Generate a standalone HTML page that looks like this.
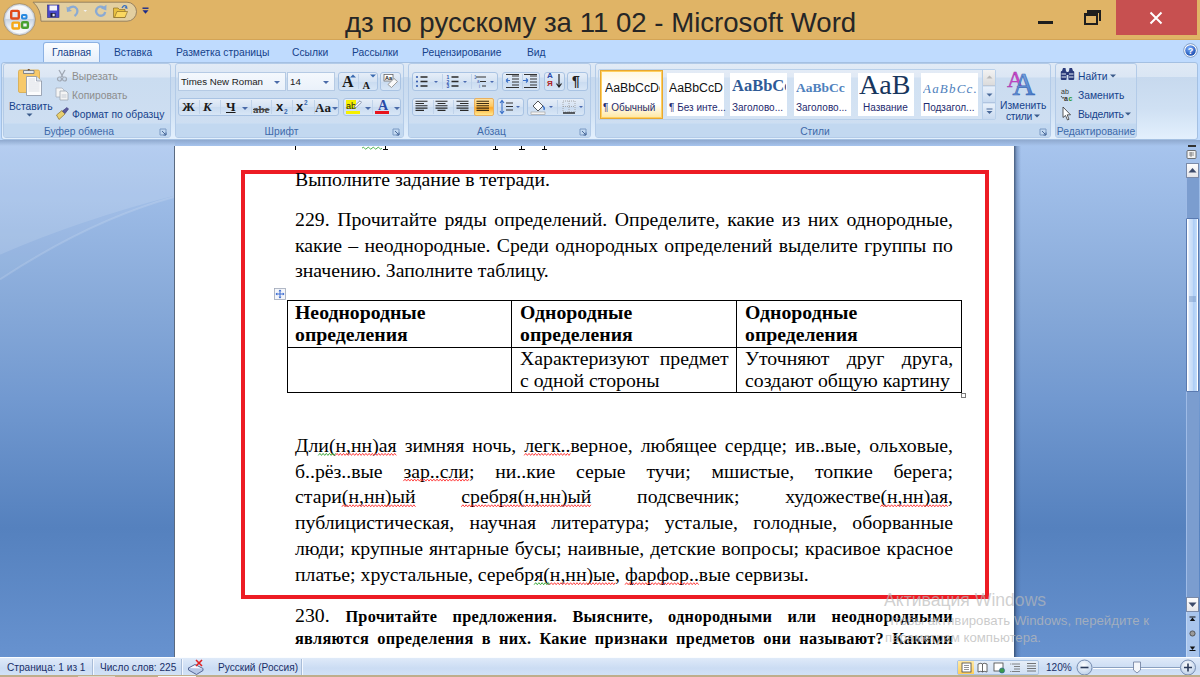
<!DOCTYPE html>
<html><head><meta charset="utf-8">
<style>
*{margin:0;padding:0;box-sizing:border-box}
html,body{width:1200px;height:677px;overflow:hidden;background:#6b93cd}
body{position:relative;font-family:"Liberation Sans",sans-serif}
.a{position:absolute}
#title{left:0;top:0;width:1200px;height:40px;background:#e0b466;border-bottom:1px solid #d3a456}
#tabs{left:0;top:40px;width:1200px;height:22px;background:#bfdbfe}
#ribbon{left:0;top:62px;width:1200px;height:78px;background:linear-gradient(#dfe9f5,#c6d9f0)}
#work{left:0;top:140px;width:1200px;height:517px;background:linear-gradient(#a8c5ee 0%,#88aad9 31%,#7299d0 50%,#5581be 75%,#6792cf 100%)}
#page{left:175px;top:146px;width:839px;height:511px;background:#fff}
#status{left:0;top:657px;width:1200px;height:18px;border-top:1px solid #fbfdff;background:linear-gradient(#dfeaf9,#cbdcf3 60%,#d2e2f7)}
.doc{font-family:"Liberation Serif",serif;font-size:19.7px;color:#000;white-space:nowrap}

.ln{position:absolute;height:26px;line-height:26px;font-family:"Liberation Serif",serif;font-size:19.75px;color:#000;white-space:nowrap}
.j{text-align:justify;text-align-last:justify;white-space:nowrap;overflow:visible}
.b2{font-size:16.3px;letter-spacing:0.3px}
#redbox{left:241px;top:170px;width:748px;height:429px;border:4px solid #ed1c24}
.tb{position:absolute;background:#000}

.tabt{top:6px;font-size:10.3px;line-height:14px;color:#15428b;white-space:nowrap}

#ribbon{background:#bfdbfe}
.panel{left:1px;top:0;width:1197px;height:78px;border:1px solid #a4c0e2;border-radius:3px;background:linear-gradient(#dfe9f5 0,#dae6f4 18%,#c7d9ee 19%,#cfe0f3 60%,#e3f0fd 100%)}
.grp{top:1px;height:75px;border:1px solid #b3cbe8;border-radius:3px;background:linear-gradient(#e2ebf6 0,#dbe6f4 18%,#cadcf0 19%,#cfdff2 100%);overflow:hidden}
.glab{position:absolute;left:0;right:0;bottom:0;height:14px;background:#c2d8f0;border-top:1px solid #c8dcf2;color:#3e6aaa;font-size:10.3px;line-height:15px;text-align:center;white-space:nowrap}
.cbox{border:1px solid #b5cae4;background:linear-gradient(#f4f8fd,#eaf1fa);font-size:9.7px;line-height:17px;color:#1a1a1a;white-space:nowrap;overflow:hidden}
.cbox span{position:absolute;left:2px;top:0}
.dd{position:absolute;display:block;width:0;height:0;border-left:3px solid transparent;border-right:3px solid transparent;border-top:3px solid #4a6aa8;top:8px}
.bgrp{border:1px solid #a9c3e3;border-radius:3px;background:linear-gradient(#e6eef8,#d4e2f3 50%,#c9dbf0 51%,#d8e6f6)}
.sep{position:absolute;top:1px;bottom:1px;width:1px;background:#c0d3ea}
.gly{line-height:16px;color:#1a1a1a;white-space:nowrap}
.rt{font-size:10.3px;line-height:14px;color:#15428b;white-space:nowrap}
.stx{line-height:18px;color:#111;white-space:nowrap;overflow:hidden}
.stl{font-size:10px;line-height:12px;color:#1e2a6e;white-space:nowrap}

.wm{font-family:"Liberation Sans",sans-serif;color:rgba(185,185,185,0.75);white-space:nowrap;line-height:18px;z-index:5}
.st{top:1.5px;font-size:10.1px;letter-spacing:0;line-height:16px;color:#1a2f68;white-space:nowrap}
.ssep{top:1px;width:2px;height:17px;border-left:1px solid #a8bcd8;border-right:1px solid #f4f8fe}
</style></head>
<body>

<div id="title" class="a">
 <svg class="a" style="left:0;top:0" width="40" height="40" viewBox="0 0 40 40">
  <defs>
   <linearGradient id="ob" x1="0" y1="0" x2="0" y2="1"><stop offset="0" stop-color="#fdfdfe"/><stop offset="0.48" stop-color="#e4eaf2"/><stop offset="0.5" stop-color="#c9d4e2"/><stop offset="0.75" stop-color="#eef2f7"/><stop offset="1" stop-color="#ffffff"/></linearGradient>
  </defs>
  <circle cx="19.5" cy="19.5" r="16.4" fill="#b89a64" opacity="0.55"/>
  <circle cx="19.5" cy="19.5" r="15.6" fill="url(#ob)" stroke="#8c8070" stroke-width="0.7"/><circle cx="19.5" cy="19.5" r="14.6" fill="none" stroke="#c0cad8" stroke-width="1.4" opacity="0.6"/>
  <rect x="11.2" y="10.9" width="7.6" height="7.6" rx="1" fill="#dfe8f4" stroke="#e04a1a" stroke-width="2.4"/>
  <rect x="22" y="15" width="4.5" height="3.5" rx="0.8" fill="#e8f0fa" stroke="#2a8ae0" stroke-width="2"/>
  <rect x="12.5" y="22.6" width="6.7" height="5.9" rx="1" fill="#eef4fa" stroke="#f5a818" stroke-width="2.4"/>
  <rect x="22.1" y="22.3" width="5.8" height="5.4" rx="1" fill="#eef4fa" stroke="#48a030" stroke-width="2.4"/>
 </svg>
 <svg class="a" style="left:30px;top:0" width="125" height="24" viewBox="0 0 125 24">
  <path d="M3 2.2 H97 A9.5 9.5 0 0 1 97 21.2 H11 Q11 9 3 2.2 Z" fill="#e3cfa0" stroke="#8e7a5c" stroke-width="0.9"/>
  <!-- save -->
  <rect x="17.5" y="5" width="11.5" height="12.5" fill="#4848c8" stroke="#2a2a80" stroke-width="0.6"/>
  <rect x="19.5" y="5.5" width="7.5" height="5" fill="#f4f4fa"/>
  <rect x="20.5" y="13" width="5" height="4" fill="#202040"/>
  <rect x="22.5" y="13.8" width="2.2" height="2.5" fill="#e8e8f0"/>
  <!-- undo -->
  <path d="M38.5 8.5 Q44 4.5 47 9 Q48.5 13 44.5 16" fill="none" stroke="#8aaad4" stroke-width="2.2"/>
  <path d="M36.5 6.5 L37 12 L42 11 Z" fill="#8aaad4"/>
  <path d="M53.5 10 L57 10 L55.25 12 Z" fill="#f2f2f2"/>
  <!-- redo -->
  <path d="M73.6 7.6 A4.6 4.6 0 1 0 75.2 12" fill="none" stroke="#8aaad4" stroke-width="2.3"/>
  <path d="M76.5 4.8 L76.3 10.5 L71 8.6 Z" fill="#8aaad4"/>
  <!-- folder -->
  <path d="M83.5 8 L88 8 L89.5 9.5 L95 9.5 L95 17.5 L83.5 17.5 Z" fill="#e8c040" stroke="#7a6020" stroke-width="0.6"/>
  <path d="M84.5 17.5 L87 11.5 L97.5 11.5 L95 17.5 Z" fill="#fbd860" stroke="#7a6020" stroke-width="0.6"/>
  <path d="M92 8 Q94 4 96.5 6.5" fill="none" stroke="#3a70c0" stroke-width="1.3"/>
  <path d="M97 5.5 L97.5 9 L94.5 8 Z" fill="#3a70c0"/>
  <!-- customize -->
  <rect x="112.5" y="7.5" width="6" height="1.4" fill="#1a2a8a"/>
  <path d="M112.5 10.3 L118.5 10.3 L115.5 13.8 Z" fill="#1a2a8a"/>
 </svg>
 <div class="a" id="ttxt" style="left:345px;top:5.7px;font-size:27.6px;line-height:34px;color:#262626;white-space:nowrap">дз по русскому за 11 02 - Microsoft Word</div>
 <div class="a" style="left:1038px;top:21px;width:15px;height:3px;background:#1e1e1e"></div>
 <div class="a" style="left:1087px;top:10px;width:14px;height:11px;border:2px solid #1e1e1e;border-top-width:3px;border-left:none;border-bottom:none"></div>
 <div class="a" style="left:1084px;top:13px;width:14px;height:12px;border:2px solid #1e1e1e;border-top-width:3px;background:#e0b466"></div>
 <div class="a" style="left:1116px;top:0;width:81px;height:35px;background:#c75050"></div>
 <svg class="a" style="left:1149px;top:11px" width="14" height="14" viewBox="0 0 14 14"><path d="M1.5 1.5 L12.5 12.5 M12.5 1.5 L1.5 12.5" stroke="#fff" stroke-width="2"/></svg>
</div>


<div id="tabs" class="a">
 <div class="a" style="left:43px;top:2px;width:57px;height:21px;border:1px solid #8db2e3;border-bottom:none;border-radius:3px 3px 0 0;background:linear-gradient(#fbfdff,#e4eefb)"></div>
 <div class="a tabt" style="left:52px">Главная</div>
 <div class="a tabt" style="left:114px">Вставка</div>
 <div class="a tabt" style="left:176px">Разметка страницы</div>
 <div class="a tabt" style="left:292px">Ссылки</div>
 <div class="a tabt" style="left:352px">Рассылки</div>
 <div class="a tabt" style="left:422px">Рецензирование</div>
 <div class="a tabt" style="left:527px">Вид</div>
 <svg class="a" style="left:1183px;top:3px" width="15" height="15" viewBox="0 0 15 15">
  <defs><radialGradient id="hb" cx="40%" cy="30%" r="70%"><stop offset="0" stop-color="#7fb0ff"/><stop offset="1" stop-color="#1a4fb0"/></radialGradient></defs>
  <circle cx="7.5" cy="7.5" r="6.8" fill="#fff" stroke="#6a8ab8" stroke-width="0.8"/>
  <circle cx="7.5" cy="7.5" r="5.3" fill="url(#hb)"/>
  <text x="7.5" y="11" text-anchor="middle" font-family="Liberation Sans" font-weight="bold" font-size="9" fill="#fff">?</text>
 </svg>
</div>

<div id="ribbon" class="a">
 <div class="a panel"></div>
 <!-- groups -->
 <div class="a grp" style="left:3px;width:168px"><div class="glab" style="padding-right:16px">Буфер обмена</div></div>
 <div class="a grp" style="left:175px;width:229px"><div class="glab" style="padding-right:16px">Шрифт</div></div>
 <div class="a grp" style="left:408px;width:183px"><div class="glab" style="padding-right:16px">Абзац</div></div>
 <div class="a grp" style="left:595px;width:456px"><div class="glab" style="padding-right:16px">Стили</div></div>
 <div class="a grp" style="left:1055px;width:82px"><div class="glab">Редактирование</div></div>
 <!-- dialog launchers -->
 <svg class="a dl" style="left:159px;top:66px" width="9" height="9" viewBox="0 0 9 9"><path d="M1 1 H7 V7 H1 Z" fill="none" stroke="#7a9ac4" stroke-width="1"/><path d="M3 3 L7 7 M4.5 7 H7 V4.5" stroke="#4a6a9a" stroke-width="1" fill="none"/></svg>
 <svg class="a dl" style="left:392px;top:66px" width="9" height="9" viewBox="0 0 9 9"><path d="M1 1 H7 V7 H1 Z" fill="none" stroke="#7a9ac4" stroke-width="1"/><path d="M3 3 L7 7 M4.5 7 H7 V4.5" stroke="#4a6a9a" stroke-width="1" fill="none"/></svg>
 <svg class="a dl" style="left:579px;top:66px" width="9" height="9" viewBox="0 0 9 9"><path d="M1 1 H7 V7 H1 Z" fill="none" stroke="#7a9ac4" stroke-width="1"/><path d="M3 3 L7 7 M4.5 7 H7 V4.5" stroke="#4a6a9a" stroke-width="1" fill="none"/></svg>
 <svg class="a dl" style="left:1039px;top:66px" width="9" height="9" viewBox="0 0 9 9"><path d="M1 1 H7 V7 H1 Z" fill="none" stroke="#7a9ac4" stroke-width="1"/><path d="M3 3 L7 7 M4.5 7 H7 V4.5" stroke="#4a6a9a" stroke-width="1" fill="none"/></svg>

 <!-- ===== Clipboard ===== -->
 <svg class="a" style="left:16px;top:5px" width="28" height="30" viewBox="0 0 28 30">
  <rect x="2.5" y="3" width="21" height="22.5" rx="1.5" fill="#f7c96a" stroke="#d8a848" stroke-width="0.8"/>
  <path d="M7.5 3.5 H18 V6.5 H7.5 Z" fill="#e4e8ee" stroke="#6a7280" stroke-width="0.8"/>
  <path d="M11 3.5 A2 2 0 0 1 14.5 3.5" fill="none" stroke="#6a7280" stroke-width="0.9"/>
  <circle cx="12.8" cy="2.8" r="0.7" fill="#804000"/>
  <path d="M10.5 9.5 H20.5 L25.5 14 V28.5 H10.5 Z" fill="#fcfcfd" stroke="#8a94a4" stroke-width="0.8"/>
  <path d="M20.5 9.5 V14 H25.5" fill="#dfe6f0" stroke="#8a94a4" stroke-width="0.7"/>
  <path d="M12.5 12 H19 M12.5 14 H19 M12.5 16 H23.5 M12.5 18 H23.5 M12.5 20 H23.5 M12.5 22 H23.5 M12.5 24 H23.5" stroke="#cdd2da" stroke-width="0.7"/>
 </svg>
 <div class="a rt" style="left:9px;top:38px;font-size:10.3px">Вставить</div>
 <svg class="a" style="left:26px;top:51px" width="7" height="4"><path d="M0.5 0.5 H6.5 L3.5 3.5 Z" fill="#3a5a8a"/></svg>
 <svg class="a" style="left:56px;top:7px" width="12" height="13" viewBox="0 0 12 13">
  <path d="M3 1 L7 8 M9 1 L5 8" stroke="#a0a8b4" stroke-width="1.3"/>
  <circle cx="3.5" cy="10" r="2" fill="none" stroke="#a0a8b4" stroke-width="1.2"/><circle cx="8.5" cy="10" r="2" fill="none" stroke="#a0a8b4" stroke-width="1.2"/>
 </svg>
 <div class="a rt" style="left:72px;top:8px;color:#8d8d8d">Вырезать</div>
 <svg class="a" style="left:55px;top:25px" width="15" height="14" viewBox="0 0 15 14">
  <path d="M1 1 H7 L9 3 V10 H1 Z" fill="#f4f4f4" stroke="#a8b0bc" stroke-width="0.8"/>
  <path d="M5 4 H11 L13 6 V13 H5 Z" fill="#f4f4f4" stroke="#a0a8b4" stroke-width="0.8"/>
  <path d="M6.5 8 H11.5 M6.5 10 H11.5" stroke="#b8c0cc" stroke-width="0.8"/>
 </svg>
 <div class="a rt" style="left:72px;top:27px;color:#8d8d8d">Копировать</div>
 <svg class="a" style="left:55px;top:44px" width="15" height="15" viewBox="0 0 15 15">
  <path d="M1.5 9 L7 4.5 L10 8 L4 13.5 Z" fill="#e8d070" stroke="#8a7030" stroke-width="0.7"/>
  <path d="M7.5 5 L12 1.5 L13.5 3 L10 7.5 Z" fill="#5a5aa0" stroke="#303070" stroke-width="0.6"/>
 </svg>
 <div class="a rt" style="left:72px;top:46px">Формат по образцу</div>

 <!-- ===== Font ===== -->
 <div class="a cbox" style="left:178px;top:10px;width:108px;height:19px"><span>Times New Roman</span><i class="dd" style="right:5px"></i></div>
 <div class="a cbox" style="left:287px;top:10px;width:48px;height:19px"><span>14</span><i class="dd" style="right:5px"></i></div>
 <div class="a bgrp" style="left:338px;top:10px;width:40px;height:19px"><div class="sep" style="left:19px"></div></div>
 <div class="a gly" style="left:342px;top:12px;font-family:'Liberation Serif';font-size:16px;font-weight:bold">A</div>
 <svg class="a" style="left:350px;top:12px" width="6" height="4"><path d="M0 3.5 L3 0.5 L6 3.5 Z" fill="#3a6ab0"/></svg>
 <div class="a gly" style="left:362.5px;top:16px;font-family:'Liberation Serif';font-size:10.5px;font-weight:bold">A</div>
 <svg class="a" style="left:370px;top:12px" width="6" height="4"><path d="M0 0.5 L6 0.5 L3 3.5 Z" fill="#3a6ab0"/></svg>
 <div class="a bgrp" style="left:380px;top:10px;width:21px;height:19px"></div>
 <svg class="a" style="left:382px;top:11px" width="17" height="16" viewBox="0 0 17 16">
  <rect x="2" y="1.5" width="9" height="6.5" fill="#fff" stroke="#555" stroke-width="0.7"/>
  <text x="6.5" y="7" text-anchor="middle" font-family="Liberation Sans" font-size="5.5" font-weight="bold" fill="#222">Aa</text>
  <path d="M6 11.5 L12 5.5 L15.5 8.5 L9.5 14.5 Z" fill="#fafafa" stroke="#888" stroke-width="0.8"/>
 </svg>

 <div class="a bgrp" style="left:178px;top:36px;width:161px;height:18px">
  <div class="sep" style="left:20px"></div><div class="sep" style="left:41px"></div><div class="sep" style="left:72px"></div><div class="sep" style="left:92px"></div><div class="sep" style="left:113px"></div><div class="sep" style="left:135px"></div>
 </div>
 <div class="a gly" style="left:182px;top:37px;font-family:'Liberation Serif';font-size:13px;font-weight:bold">Ж</div>
 <div class="a gly" style="left:203px;top:37px;font-family:'Liberation Serif';font-size:13px;font-weight:bold;font-style:italic">К</div>
 <div class="a gly" style="left:226px;top:37px;font-family:'Liberation Serif';font-size:13px;font-weight:bold;text-decoration:underline">Ч</div>
 <i class="dd a" style="left:242px;top:45px"></i>
 <div class="a gly" style="left:253px;top:39px;font-family:'Liberation Serif';font-size:11px;font-weight:bold;color:#444;text-decoration:line-through">abe</div>
 <div class="a gly" style="left:276px;top:37px;font-size:13px;font-weight:bold">x</div><div class="a gly" style="left:284px;top:42px;font-size:6.5px;font-weight:bold;color:#3a6ab0">2</div>
 <div class="a gly" style="left:296px;top:37px;font-size:13px;font-weight:bold">x</div><div class="a gly" style="left:304px;top:33px;font-size:6.5px;font-weight:bold;color:#3a6ab0">2</div>
 <div class="a gly" style="left:315px;top:38px;font-family:'Liberation Serif';font-size:13px;font-weight:bold">Aa</div>
 <i class="dd a" style="left:332px;top:45px"></i>

 <div class="a bgrp" style="left:343px;top:36px;width:58px;height:18px"><div class="sep" style="left:28px"></div></div>
 <div class="a" style="left:346px;top:38px;width:10px;height:9px;background:#f6f000"></div>
 <div class="a gly" style="left:346px;top:36px;font-size:9px">ab</div>
 <svg class="a" style="left:353px;top:38px" width="9" height="9"><path d="M1 8 L2 5.5 L7 0.8 L8.5 2.3 L3.5 7 Z" fill="#fff" stroke="#6a7a9a" stroke-width="0.8"/></svg>
 <div class="a" style="left:346px;top:49px;width:14px;height:3px;background:#f6f000"></div>
 <i class="dd a" style="left:365px;top:45px"></i>
 <div class="a gly" style="left:378px;top:36px;font-family:'Liberation Serif';font-size:14px;font-weight:bold;color:#2a4aa8">A</div>
 <div class="a" style="left:375px;top:49px;width:14px;height:3px;background:#e8141c"></div>
 <i class="dd a" style="left:394px;top:45px"></i>

 <!-- ===== Paragraph ===== -->
 <div class="a bgrp" style="left:412px;top:10px;width:86px;height:19px"><div class="sep" style="left:29px"></div><div class="sep" style="left:58px"></div></div>
 <svg class="a" style="left:414px;top:12px" width="84" height="15" viewBox="0 0 84 15">
  <g fill="#3a5fb0"><circle cx="3" cy="3" r="1.1"/><circle cx="3" cy="7.5" r="1.1"/><circle cx="3" cy="12" r="1.1"/></g>
  <g stroke="#2a2a2a" stroke-width="1.4"><path d="M6.5 3 H13.5 M6.5 7.5 H13.5 M6.5 12 H13.5"/></g>
  <path d="M20 7 H24 L22 9 Z" fill="#4a6ab0"/>
  <g fill="#2f55b0" font-family="Liberation Sans" font-weight="bold" font-size="5"><text x="32.5" y="5">1</text><text x="32.5" y="9.5">2</text><text x="32.5" y="14">3</text></g>
  <g stroke="#2a2a2a" stroke-width="1.4"><path d="M37.5 3 H44.5 M37.5 7.5 H44.5 M37.5 12 H44.5"/></g>
  <path d="M49 7 H53 L51 9 Z" fill="#4a6ab0"/>
  <g fill="#3a5fb0" font-family="Liberation Sans" font-size="4.5"><text x="60" y="4.5">1</text><text x="63" y="9">a</text><text x="65" y="13.5">i</text></g>
  <g stroke="#333" stroke-width="1.1"><path d="M62 3 H72 M66 7.5 H72 M68 12 H72"/></g>
  <path d="M76 7 H80 L78 9 Z" fill="#4a6ab0"/>
 </svg>
 <div class="a bgrp" style="left:502px;top:10px;width:38px;height:19px"><div class="sep" style="left:19px"></div></div>
 <svg class="a" style="left:504px;top:12px" width="36" height="15" viewBox="0 0 36 15">
  <g stroke="#333" stroke-width="1.1"><path d="M8 2 H15 M8 5 H15 M8 8 H15 M8 11 H15 M2 13.5 H15 M2 .5 H15"/></g>
  <path d="M6 6.5 L2 6.5 M2 6.5 L4 4.5 M2 6.5 L4 8.5" stroke="#3a70c8" stroke-width="1.1" fill="none"/>
  <g stroke="#333" stroke-width="1.1"><path d="M26 2 H33 M26 5 H33 M26 8 H33 M26 11 H33 M20 13.5 H33 M20 .5 H33"/></g>
  <path d="M19 6.5 L24 6.5 M24 6.5 L22 4.5 M24 6.5 L22 8.5" stroke="#3a70c8" stroke-width="1.1" fill="none"/>
 </svg>
 <div class="a bgrp" style="left:544px;top:10px;width:21px;height:19px"></div>
 <div class="a gly" style="left:547px;top:10px;font-size:8px;font-weight:bold;color:#2a4aa8;line-height:8px">A<br><span style="color:#b02020">Я</span></div>
 <svg class="a" style="left:556px;top:12px" width="6" height="15"><path d="M3 0 V12 M0.5 9.5 L3 13 L5.5 9.5" stroke="#222" stroke-width="1.2" fill="none"/></svg>
 <div class="a bgrp" style="left:567px;top:10px;width:21px;height:19px"></div>
 <div class="a gly" style="left:572px;top:11px;font-size:14px;font-weight:bold;color:#222">¶</div>

 <div class="a bgrp" style="left:412px;top:36px;width:81px;height:18px"><div class="sep" style="left:20px"></div><div class="sep" style="left:40px"></div><div class="sep" style="left:61px"></div></div>
 <div class="a" style="left:474px;top:36px;width:20px;height:18px;border:1px solid #e8b060;border-radius:2px;background:linear-gradient(#ffe2a0,#ffc860 45%,#ffa828 55%,#ffe890)"></div>
 <svg class="a" style="left:412px;top:37px" width="82" height="16" viewBox="0 0 82 16">
  <g stroke="#2a2a2a" stroke-width="1.1">
   <path d="M3.5 2.2 H15.5 M3.5 4.5 H12 M3.5 6.8 H15.5 M3.5 9.1 H15.5 M3.5 11.4 H12"/>
   <path d="M23.5 2.2 H35.5 M25.5 4.5 H33.5 M23.5 6.8 H35.5 M23.5 9.1 H35.5 M25.5 11.4 H33.5"/>
   <path d="M44.5 2.2 H56.5 M48 4.5 H56.5 M44.5 6.8 H56.5 M44.5 9.1 H56.5 M48 11.4 H56.5"/>
   <path d="M64.5 2.2 H77 M64.5 4.5 H77 M64.5 6.8 H77 M64.5 9.1 H77 M64.5 11.4 H77" stroke="#3a2a10"/>
  </g>
 </svg>
 <div class="a bgrp" style="left:497px;top:36px;width:27px;height:18px"></div>
 <svg class="a" style="left:499px;top:37px" width="24" height="16" viewBox="0 0 24 16">
  <path d="M3 2 V14 M1 4 L3 1.5 L5 4 M1 12 L3 14.5 L5 12" stroke="#3a70c8" stroke-width="1.1" fill="none"/>
  <g stroke="#333" stroke-width="1.2"><path d="M7 4 H14 M7 7.5 H14 M7 11 H14"/></g>
  <path d="M17 7 H21 L19 9 Z" fill="#4a6ab0"/>
 </svg>
 <div class="a bgrp" style="left:527px;top:36px;width:58px;height:18px"><div class="sep" style="left:29px"></div></div>
 <svg class="a" style="left:529px;top:37px" width="56" height="16" viewBox="0 0 56 16">
  <path d="M4 7 L9 2 L14 7 L9 12 Z" fill="#fff" stroke="#444" stroke-width="0.9"/>
  <path d="M14 7 Q16 9 15 11" stroke="#3a70c8" stroke-width="1.5" fill="none"/>
  <rect x="2" y="13" width="14" height="2.5" fill="#f4f4f4" stroke="#999" stroke-width="0.6"/>
  <path d="M20 7 H24 L22 9 Z" fill="#4a6ab0"/>
  <g stroke="#999" stroke-width="0.8" stroke-dasharray="1 1" fill="none"><path d="M34 2 H46 V13 H34 Z M40 2 V13 M34 7.5 H46"/></g>
  <path d="M34 14 H46" stroke="#222" stroke-width="1.4"/>
  <path d="M50 7 H54 L52 9 Z" fill="#4a6ab0"/>
 </svg>

 <!-- ===== Styles ===== -->
 <div class="a" style="left:598px;top:7px;width:398px;height:51px;border:1px solid #b9d0ea;border-radius:2px;background:rgba(255,255,255,0.15)"></div>
 <div class="a sty" style="left:600px;top:8px;width:63px;height:49px;border:1px solid #e8a830;background:linear-gradient(#fff8e0,#fff 30%,#fff 70%,#ffe7a0);box-shadow:inset 0 0 0 1px #ffd060"></div>
 <div class="a stx" style="left:605px;top:17px;font-size:12.3px;width:55px">AaBbCcDc</div>
 <div class="a stl" style="left:603px;top:40px">¶ Обычный</div>
 <div class="a sty" style="left:667px;top:11px;width:57px;height:43px;background:#fff"></div>
 <div class="a stx" style="left:669px;top:17px;font-size:12.3px;width:54px">AaBbCcDc</div>
 <div class="a stl" style="left:669px;top:40px">¶ Без инте...</div>
 <div class="a sty" style="left:730px;top:11px;width:57px;height:43px;background:#fff"></div>
 <div class="a stx" style="left:732px;top:15px;font-family:'Liberation Serif';font-weight:bold;font-size:16.5px;color:#2f5a96;width:54px">AaBbCc</div>
 <div class="a stl" style="left:732px;top:40px">Заголово...</div>
 <div class="a sty" style="left:794px;top:11px;width:57px;height:43px;background:#fff"></div>
 <div class="a stx" style="left:796px;top:18px;font-family:'Liberation Serif';font-weight:bold;font-size:13.5px;color:#4f81bd;width:55px;top:17px">AaBbCc</div>
 <div class="a stl" style="left:796px;top:40px">Заголово...</div>
 <div class="a sty" style="left:858px;top:11px;width:56px;height:43px;background:#fff"></div>
 <div class="a stx" style="left:859px;top:10px;line-height:26px;font-family:'Liberation Serif';font-size:28px;color:#17365d;width:54px">AaB</div>
 <div class="a stl" style="left:863px;top:40px">Название</div>
 <div class="a sty" style="left:921px;top:11px;width:57px;height:43px;background:#fff"></div>
 <div class="a stx" style="left:923px;top:18px;font-family:'Liberation Serif';font-style:italic;font-size:13px;color:#4f81bd;width:55px;letter-spacing:1.2px">AaBbCc.</div>
 <div class="a stl" style="left:923px;top:40px">Подзагол...</div>
 <div class="a" style="left:982px;top:7px;width:13px;height:51px;border-left:1px solid #b9d0ea"></div>
 <div class="a" style="left:983px;top:8px;width:12px;height:16px;background:linear-gradient(#f2f2f2,#dcdcdc);border-bottom:1px solid #c0c8d4"></div>
 <svg class="a" style="left:986px;top:13px" width="7" height="4"><path d="M0.5 3.5 L3.5 0.5 L6.5 3.5 Z" fill="#b8b8b8"/></svg>
 <div class="a" style="left:983px;top:25px;width:12px;height:16px;background:linear-gradient(#e8f0fa,#c8daf0);border-bottom:1px solid #b0c4e0"></div>
 <svg class="a" style="left:986px;top:31px" width="7" height="4"><path d="M0.5 0.5 H6.5 L3.5 3.5 Z" fill="#4a6a9a"/></svg>
 <div class="a" style="left:983px;top:42px;width:12px;height:15px;background:linear-gradient(#e8f0fa,#c8daf0)"></div>
 <svg class="a" style="left:986px;top:46px" width="7" height="7"><path d="M0.5 1 H6.5" stroke="#4a6a9a"/><path d="M0.5 3 H6.5 L3.5 6 Z" fill="#4a6a9a"/></svg>
 <svg class="a" style="left:1004px;top:4px" width="34" height="30" viewBox="0 0 34 30">
  <defs><linearGradient id="ag" x1="0" y1="0" x2="1" y2="1"><stop offset="0" stop-color="#9cc0f0"/><stop offset="1" stop-color="#3a6ec0"/></linearGradient></defs>
  <text x="3" y="21" font-family="Liberation Serif" font-size="23" fill="#c848c8" stroke="#a030a8" stroke-width="0.4">A</text>
  <text x="8.5" y="28.5" font-family="Liberation Serif" font-size="31" fill="url(#ag)" stroke="#3a6ab8" stroke-width="0.7">A</text>
 </svg>
 <div class="a rt" style="left:1000px;top:37px">Изменить</div>
 <div class="a rt" style="left:1006px;top:48px;letter-spacing:-0.3px">стили</div>
 <svg class="a" style="left:1034px;top:52px" width="6" height="4"><path d="M0 0.5 H6 L3 3.5 Z" fill="#3a5a8a"/></svg>

 <!-- ===== Editing ===== -->
 <svg class="a" style="left:1060px;top:5px" width="15" height="14" viewBox="0 0 15 14">
  <path d="M2 4 L3 1 H5.5 L6 4 Z M9 4 L9.5 1 H12 L13 4 Z" fill="#2a3a7a"/>
  <rect x="0.8" y="4" width="5.8" height="9" rx="1" fill="#2a3a7a"/>
  <rect x="8.4" y="4" width="5.8" height="9" rx="1" fill="#2a3a7a"/>
  <rect x="6" y="5" width="3" height="3" fill="#2a3a7a"/>
  <path d="M1.5 7 H6 M1.5 10 H6 M9 7 H13.5 M9 10 H13.5" stroke="#e8eef8" stroke-width="1.1"/>
 </svg>
 <div class="a rt" style="left:1078px;top:8px">Найти</div>
 <svg class="a" style="left:1110px;top:12px" width="6" height="4"><path d="M0 0.5 H6 L3 3.5 Z" fill="#3a5a8a"/></svg>
 <svg class="a" style="left:1060px;top:25px" width="14" height="15" viewBox="0 0 14 15">
  <text x="1" y="6.5" font-family="Liberation Sans" font-size="7" fill="#333">ab</text>
  <text x="4" y="13.5" font-family="Liberation Sans" font-size="7" font-weight="bold" fill="#333">a</text>
  <text x="8.5" y="13.5" font-family="Liberation Sans" font-size="7" font-weight="bold" fill="#2a9a2a">c</text>
  <path d="M1 9 L3 11.5 L4 10" stroke="#333" stroke-width="0.8" fill="none"/>
 </svg>
 <div class="a rt" style="left:1078px;top:27px">Заменить</div>
 <svg class="a" style="left:1062px;top:44px" width="10" height="15" viewBox="0 0 10 15">
  <path d="M1 1 L1 11.5 L3.5 9.5 L5.5 14 L7 13.3 L5.2 8.8 L8.5 8.8 Z" fill="#fff" stroke="#333" stroke-width="0.8"/>
 </svg>
 <div class="a rt" style="left:1078px;top:46px;letter-spacing:-0.25px">Выделить</div>
 <svg class="a" style="left:1125px;top:50px" width="6" height="4"><path d="M0 0.5 H6 L3 3.5 Z" fill="#3a5a8a"/></svg>
</div>

<div id="work" class="a">
 <svg class="a" style="left:0;top:0" width="175" height="200" viewBox="0 0 175 200">
  <path d="M0 0 H175 V55.5 Q80 80 0 114.7 Z" fill="#ffffff" opacity="0.16"/>
  <path d="M0 139.5 Q90 80 175 56.7" fill="none" stroke="#ffffff" stroke-width="2" opacity="0.14"/>
  <path d="M0 139.5 Q90 80 175 56.7 V55.5 Q80 80 0 114.7 Z" fill="#ffffff" opacity="0.05"/>
 </svg>
 <div class="a" style="left:0;top:0;width:1200px;height:6px;background:linear-gradient(#8fa9cf,rgba(160,190,230,0))"></div>
</div>
<div id="page" class="a">
 <div class="a" style="left:120px;top:0;width:1.2px;height:3.5px;background:#000"></div>
 <svg class="a" style="left:186px;top:0" width="30" height="5"><path d="M1 2.2 Q2.25 0.2 3.5 2.2 T6 2.2 T8.5 2.2 T11 2.2 T13.5 2.2 T16 2.2 T18.5 2.2 T21 2.2" fill="none" stroke="#3aaa3a" stroke-width="0.9"/></svg>
 <div class="a" style="left:209.5px;top:0;width:1.4px;height:3.5px;background:#000"></div><div class="a" style="left:207.5px;top:2.5px;width:5.5px;height:1px;background:#000"></div>
 <div class="a" style="left:319.5px;top:0;width:1.4px;height:3.5px;background:#000"></div><div class="a" style="left:317.5px;top:2.5px;width:5.5px;height:1px;background:#000"></div>
 <div class="a" style="left:346px;top:0;width:1.4px;height:3.5px;background:#000"></div><div class="a" style="left:344px;top:2.5px;width:5.5px;height:1px;background:#000"></div>
 <div class="a" style="left:368.5px;top:0;width:1.4px;height:3.5px;background:#000"></div><div class="a" style="left:366.5px;top:2.5px;width:5.5px;height:1px;background:#000"></div>
</div>
<div class="a" style="left:174px;top:146px;width:1px;height:511px;background:#5a6a80"></div>
<div class="a" style="left:1014px;top:146px;width:7px;height:511px;background:linear-gradient(90deg,rgba(40,60,90,0.75),rgba(60,90,140,0.35) 40%,rgba(80,110,160,0))"></div>
<!-- table handles -->
<svg class="a" style="left:274px;top:288px" width="12" height="12" viewBox="0 0 12 12">
 <rect x="0.5" y="0.5" width="11" height="11" fill="#f4f6fa" stroke="#a0a8b8" stroke-width="0.8"/>
 <path d="M6 2 V10 M2 6 H10" stroke="#3a6ad0" stroke-width="1"/>
 <path d="M6 1.5 L4.5 3.2 H7.5 Z M6 10.5 L4.5 8.8 H7.5 Z M1.5 6 L3.2 4.5 V7.5 Z M10.5 6 L8.8 4.5 V7.5 Z" fill="#3a6ad0"/>
</svg>
<div class="a" style="left:961px;top:393px;width:5px;height:5px;border:1px solid #7a7a7a;background:#fff"></div>
<!-- scrollbar -->

<div class="a" style="left:1188px;top:145px;width:8px;height:1.5px;background:#333"></div>
<svg class="a" style="left:1186px;top:149px" width="12" height="12" viewBox="0 0 12 12"><rect x="1" y="1.5" width="9" height="8" rx="1" fill="#f2f2f2" stroke="#555" stroke-width="0.8"/><path d="M3 4 H8 M3 6 H8 M5 3 V8" stroke="#666" stroke-width="0.7"/></svg>
<div class="a" style="left:1186px;top:163px;width:13px;height:434px;background:#7b9dcf;border-left:1px solid #9fbbe6"></div>
<div class="a" style="left:1186px;top:163px;width:13px;height:15px;background:linear-gradient(#fdfdfd,#e6e6ea);border:1px solid #7a8aa8"></div>
<svg class="a" style="left:1188px;top:167px" width="9" height="6"><path d="M0.5 5.5 L4.5 1 L8.5 5.5 Z" fill="#3c4a6a"/></svg>
<div class="a" style="left:1186px;top:218px;width:13px;height:174px;border:1px solid #5a7ab0;border-radius:1px;background:linear-gradient(90deg,#fff 0,#fff 1px,#d6e5fa 2px,#c4dbf8 50%,#aacbf6 51%,#c2dcfa 90%,#fff 91%)"></div>
<svg class="a" style="left:1188px;top:296px" width="9" height="6"><path d="M1 1 H8 M1 3 H8 M1 5 H8" stroke="#6d8dbd" stroke-width="0.8"/></svg>
<div class="a" style="left:1186px;top:597px;width:13px;height:15px;background:linear-gradient(#fdfdfd,#e6e6ea);border:1px solid #7a8aa8"></div>
<svg class="a" style="left:1188px;top:602px" width="9" height="6"><path d="M0.5 0.5 L4.5 5 L8.5 0.5 Z" fill="#3c4a6a"/></svg>
<div class="a" style="left:1186px;top:612px;width:13px;height:45px;background:#a9c5ec;border-left:1px solid #c0d6f4"></div>
<svg class="a" style="left:1188px;top:614px" width="9" height="42" viewBox="0 0 9 42">
 <path d="M1.5 3 H7.5" stroke="#111" stroke-width="1"/><path d="M4.5 3.5 L1.8 7 H7.2 Z" fill="#111"/>
 <circle cx="4.5" cy="19.5" r="2.6" fill="#9a9a9a" stroke="#333" stroke-width="0.7"/>
 <path d="M1.5 36.5 H7.5" stroke="#111" stroke-width="1"/><path d="M4.5 36 L1.8 32.5 H7.2 Z" fill="#111"/>
 </svg>
<!-- watermark -->
<div class="a wm" style="left:884px;top:589px;font-size:17.6px;line-height:22px;color:rgba(185,185,185,0.68)">Активация Windows</div>
<div class="a wm" style="left:885px;top:612px;font-size:13.2px">Чтобы активировать Windows, перейдите к</div>
<div class="a wm" style="left:885px;top:629px;font-size:13.2px">параметрам компьютера.</div>


<div class="tb" style="left:287px;top:300px;width:675px;height:1px"></div>
<div class="tb" style="left:287px;top:347px;width:675px;height:1px"></div>
<div class="tb" style="left:287px;top:392px;width:675px;height:1px"></div>
<div class="tb" style="left:287px;top:300px;width:1px;height:93px"></div>
<div class="tb" style="left:511px;top:300px;width:1px;height:93px"></div>
<div class="tb" style="left:736px;top:300px;width:1px;height:93px"></div>
<div class="tb" style="left:961px;top:300px;width:1px;height:93px"></div>
<div id="redbox" class="a"></div>
<div class="ln" style="top:166.03px;left:295px;">Выполните задание в тетради.</div>
<div class="ln j" style="top:205.83px;left:295px;width:658px;">229. Прочитайте ряды определений. Определите, какие из них однородные,</div>
<div class="ln j" style="top:231.53px;left:295px;width:658px;">какие – неоднородные. Среди однородных определений выделите группы по</div>
<div class="ln" style="top:257.43px;left:295px;">значению. Заполните таблицу.</div>
<div class="ln" style="top:298.63px;left:295px;"><b>Неоднородные</b></div>
<div class="ln" style="top:321.13px;left:295px;"><b>определения</b></div>
<div class="ln" style="top:298.63px;left:520px;"><b>Однородные</b></div>
<div class="ln" style="top:321.13px;left:520px;"><b>определения</b></div>
<div class="ln" style="top:298.63px;left:745px;"><b>Однородные</b></div>
<div class="ln" style="top:321.13px;left:745px;"><b>определения</b></div>
<div class="ln j" style="top:345.08px;left:520px;width:208.6px;">Характеризуют предмет</div>
<div class="ln" style="top:367.33px;left:520px;">с одной стороны</div>
<div class="ln j" style="top:345.08px;left:745px;width:208.2px;">Уточняют друг друга,</div>
<div class="ln" style="top:367.33px;left:745px;">создают общую картину</div>
<div class="ln j" style="top:432.03px;left:295px;width:658px;">Дл<span class="sg">и(</span><span class="sr">н,нн)ая</span> зимняя ночь, <span class="sr">легк..</span>верное, любящее сердце; ив..вые, ольховые,</div>
<div class="ln j" style="top:457.73px;left:295px;width:658px;">б..рёз..вые <span class="sr">зар..сли</span>; ни..кие серые тучи; мшистые, топкие берега;</div>
<div class="ln j" style="top:483.43px;left:295px;width:658px;">стари<span class="sr">(н,нн)ый</span> <span class="sr">сребря(н,нн)ый</span> подсвечник; художестве<span class="sr">(н,нн)ая</span>,</div>
<div class="ln j" style="top:509.13px;left:295px;width:658px;">публицистическая, научная литература; усталые, голодные, оборванные</div>
<div class="ln j" style="top:534.93px;left:295px;width:658px;">люди; крупные янтарные бусы; наивные, детские вопросы; красивое красное</div>
<div class="ln" style="top:561.33px;left:295px;">платье; хрустальные, серебр<span class="sg">я(</span><span class="sr">н,нн)ые</span>, <span class="sr">фарфор..</span>вые сервизы.</div>
<div class="ln j" style="top:601.63px;left:295px;width:658px;">230. <b class='b2'>Прочитайте предложения. Выясните, однородными или неоднородными</b></div>
<div class="ln j" style="top:624.33px;left:295px;width:658px;"><b class='b2'>являются определения в них. Какие признаки предметов они называют? Какими</b></div>
<svg id="squig" class="a" style="left:0;top:0;z-index:3" width="1200" height="677"><path d="M318.3 455.39 L319.9 453.39 L321.5 455.39 L323.1 453.39 L324.7 455.39 L326.3 453.39 L327.9 455.39 L329.5 453.39 L331.1 455.39 L332.7 453.39 L334.3 455.39 L335.5 453.39" stroke="#2aa02a" stroke-width="0.9" fill="none"/><path d="M335.5 455.39 L337.1 453.39 L338.7 455.39 L340.3 453.39 L341.9 455.39 L343.5 453.39 L345.1 455.39 L346.7 453.39 L348.3 455.39 L349.9 453.39 L351.5 455.39 L353.1 453.39 L354.7 455.39 L356.3 453.39 L357.9 455.39 L359.5 453.39 L361.1 455.39 L362.7 453.39 L364.3 455.39 L365.9 453.39 L367.5 455.39 L369.1 453.39 L370.7 455.39 L372.3 453.39 L373.9 455.39 L375.5 453.39 L377.1 455.39 L378.7 453.39 L380.3 455.39 L381.9 453.39 L383.5 455.39 L385.1 453.39 L386.7 455.39 L388.3 453.39 L389.9 455.39 L391.5 453.39 L393.1 455.39 L394.7 453.39 L396.3 455.39" stroke="#ff2a2a" stroke-width="0.9" fill="none"/><path d="M524.2 455.39 L525.8 453.39 L527.4 455.39 L529.0 453.39 L530.6 455.39 L532.2 453.39 L533.8 455.39 L535.4 453.39 L537.0 455.39 L538.6 453.39 L540.2 455.39 L541.8 453.39 L543.4 455.39 L545.0 453.39 L546.6 455.39 L548.2 453.39 L549.8 455.39 L551.4 453.39 L553.0 455.39 L554.6 453.39 L556.2 455.39 L557.8 453.39 L559.4 455.39 L561.0 453.39 L562.6 455.39 L564.2 453.39 L565.8 455.39 L567.4 453.39 L569.0 455.39 L570.4 453.39" stroke="#ff2a2a" stroke-width="0.9" fill="none"/><path d="M403.4 481.09 L405.0 479.09 L406.6 481.09 L408.2 479.09 L409.8 481.09 L411.4 479.09 L413.0 481.09 L414.6 479.09 L416.2 481.09 L417.8 479.09 L419.4 481.09 L421.0 479.09 L422.6 481.09 L424.2 479.09 L425.8 481.09 L427.4 479.09 L429.0 481.09 L430.6 479.09 L432.2 481.09 L433.8 479.09 L435.4 481.09 L437.0 479.09 L438.6 481.09 L440.2 479.09 L441.8 481.09 L443.4 479.09 L445.0 481.09 L446.6 479.09 L448.2 481.09 L449.8 479.09 L451.4 481.09 L453.0 479.09 L454.6 481.09 L456.2 479.09 L457.8 481.09 L459.4 479.09 L461.0 481.09 L462.6 479.09 L464.2 481.09 L465.8 479.09 L467.4 481.09 L468.9 479.09" stroke="#ff2a2a" stroke-width="0.9" fill="none"/><path d="M341.9 506.79 L343.5 504.79 L345.1 506.79 L346.7 504.79 L348.3 506.79 L349.9 504.79 L351.5 506.79 L353.1 504.79 L354.7 506.79 L356.3 504.79 L357.9 506.79 L359.5 504.79 L361.1 506.79 L362.7 504.79 L364.3 506.79 L365.9 504.79 L367.5 506.79 L369.1 504.79 L370.7 506.79 L372.3 504.79 L373.9 506.79 L375.5 504.79 L377.1 506.79 L378.7 504.79 L380.3 506.79 L381.9 504.79 L383.5 506.79 L385.1 504.79 L386.7 506.79 L388.3 504.79 L389.9 506.79 L391.5 504.79 L393.1 506.79 L394.7 504.79 L396.3 506.79 L397.9 504.79 L399.5 506.79 L401.1 504.79 L402.7 506.79 L404.3 504.79 L405.9 506.79 L407.5 504.79 L409.1 506.79 L410.7 504.79 L412.3 506.79 L413.9 504.79 L415.5 506.79" stroke="#ff2a2a" stroke-width="0.9" fill="none"/><path d="M461.3 506.79 L462.9 504.79 L464.5 506.79 L466.1 504.79 L467.7 506.79 L469.3 504.79 L470.9 506.79 L472.5 504.79 L474.1 506.79 L475.7 504.79 L477.3 506.79 L478.9 504.79 L480.5 506.79 L482.1 504.79 L483.7 506.79 L485.3 504.79 L486.9 506.79 L488.5 504.79 L490.1 506.79 L491.7 504.79 L493.3 506.79 L494.9 504.79 L496.5 506.79 L498.1 504.79 L499.7 506.79 L501.3 504.79 L502.9 506.79 L504.5 504.79 L506.1 506.79 L507.7 504.79 L509.3 506.79 L510.9 504.79 L512.5 506.79 L514.1 504.79 L515.7 506.79 L517.3 504.79 L518.9 506.79 L520.5 504.79 L522.1 506.79 L523.7 504.79 L525.3 506.79 L526.9 504.79 L528.5 506.79 L530.1 504.79 L531.7 506.79 L533.3 504.79 L534.9 506.79 L536.5 504.79 L538.1 506.79 L539.7 504.79 L541.3 506.79 L542.9 504.79 L544.5 506.79 L546.1 504.79 L547.7 506.79 L549.3 504.79 L550.9 506.79 L552.5 504.79 L554.1 506.79 L555.7 504.79 L557.3 506.79 L558.9 504.79 L560.5 506.79 L562.1 504.79 L563.7 506.79 L565.3 504.79 L566.9 506.79 L568.5 504.79 L570.1 506.79 L571.7 504.79 L573.3 506.79 L574.9 504.79 L576.5 506.79 L578.1 504.79 L579.7 506.79 L581.3 504.79 L582.9 506.79 L584.5 504.79 L586.1 506.79 L587.7 504.79 L589.3 506.79 L590.9 504.79" stroke="#ff2a2a" stroke-width="0.9" fill="none"/><path d="M880.4 506.79 L882.0 504.79 L883.6 506.79 L885.2 504.79 L886.8 506.79 L888.4 504.79 L890.0 506.79 L891.6 504.79 L893.2 506.79 L894.8 504.79 L896.4 506.79 L898.0 504.79 L899.6 506.79 L901.2 504.79 L902.8 506.79 L904.4 504.79 L906.0 506.79 L907.6 504.79 L909.2 506.79 L910.8 504.79 L912.4 506.79 L914.0 504.79 L915.6 506.79 L917.2 504.79 L918.8 506.79 L920.4 504.79 L922.0 506.79 L923.6 504.79 L925.2 506.79 L926.8 504.79 L928.4 506.79 L930.0 504.79 L931.6 506.79 L933.2 504.79 L934.8 506.79 L936.4 504.79 L938.0 506.79 L939.6 504.79 L941.2 506.79 L942.8 504.79 L944.4 506.79 L946.0 504.79 L947.6 506.79" stroke="#ff2a2a" stroke-width="0.9" fill="none"/><path d="M534.1 584.70 L535.7 582.70 L537.3 584.70 L538.9 582.70 L540.5 584.70 L542.1 582.70 L543.7 584.70 L545.3 582.70 L546.9 584.70 L548.5 582.70 L549.8 584.70" stroke="#2aa02a" stroke-width="0.9" fill="none"/><path d="M549.8 584.70 L551.4 582.70 L553.0 584.70 L554.6 582.70 L556.2 584.70 L557.8 582.70 L559.4 584.70 L561.0 582.70 L562.6 584.70 L564.2 582.70 L565.8 584.70 L567.4 582.70 L569.0 584.70 L570.6 582.70 L572.2 584.70 L573.8 582.70 L575.4 584.70 L577.0 582.70 L578.6 584.70 L580.2 582.70 L581.8 584.70 L583.4 582.70 L585.0 584.70 L586.6 582.70 L588.2 584.70 L589.8 582.70 L591.4 584.70 L593.0 582.70 L594.6 584.70 L596.2 582.70 L597.8 584.70 L599.4 582.70 L601.0 584.70 L602.6 582.70 L604.2 584.70 L605.8 582.70 L607.4 584.70 L609.0 582.70 L610.6 584.70 L612.2 582.70 L613.8 584.70 L615.1 582.70" stroke="#ff2a2a" stroke-width="0.9" fill="none"/><path d="M625.0 584.70 L626.6 582.70 L628.2 584.70 L629.8 582.70 L631.4 584.70 L633.0 582.70 L634.6 584.70 L636.2 582.70 L637.8 584.70 L639.4 582.70 L641.0 584.70 L642.6 582.70 L644.2 584.70 L645.8 582.70 L647.4 584.70 L649.0 582.70 L650.6 584.70 L652.2 582.70 L653.8 584.70 L655.4 582.70 L657.0 584.70 L658.6 582.70 L660.2 584.70 L661.8 582.70 L663.4 584.70 L665.0 582.70 L666.6 584.70 L668.2 582.70 L669.8 584.70 L671.4 582.70 L673.0 584.70 L674.6 582.70 L676.2 584.70 L677.8 582.70 L679.4 584.70 L681.0 582.70 L682.6 584.70 L684.2 582.70 L685.8 584.70 L687.4 582.70 L689.0 584.70 L690.6 582.70 L692.2 584.70 L693.8 582.70 L695.4 584.70 L697.0 582.70 L698.6 584.70" stroke="#ff2a2a" stroke-width="0.9" fill="none"/></svg>
<div id="status" class="a">
 <div class="a st" style="left:7px">Страница: 1 из 1</div>
 <div class="a ssep" style="left:92px"></div>
 <div class="a st" style="left:100px">Число слов: 225</div>
 <div class="a ssep" style="left:181px"></div>
 <svg class="a" style="left:187px;top:1px" width="18" height="16" viewBox="0 0 18 16">
  <path d="M1.5 9 L8 5.5 L16 9.5 L9.5 13.5 Z" fill="#f8f8ff" stroke="#4a5a8a" stroke-width="0.9"/>
  <path d="M1.5 9 V11 L9.5 15.5 L16 11.5 V9.5" fill="#b8c8e8" stroke="#4a5a8a" stroke-width="0.9"/>
  <path d="M9 1 L15 7 M15 1 L9 7" stroke="#e02020" stroke-width="1.6"/>
 </svg>
 <div class="a st" style="left:218px">Русский (Россия)</div>
 <div class="a ssep" style="left:301px"></div>
 <div class="a" style="left:957px;top:2px;width:82px;height:15px;border:1px solid #a9c3e3;border-radius:2px;background:linear-gradient(#e6eef8,#d0e0f4)"></div>
 <div class="a" style="left:958px;top:3px;width:16px;height:13px;background:linear-gradient(#ffeaa8,#ffcf5a)"></div>
 <svg class="a" style="left:958px;top:3px" width="80" height="13" viewBox="0 0 80 13">
  <rect x="4" y="2" width="9" height="9" fill="#fff" stroke="#444" stroke-width="0.8"/><path d="M6 4.5 H11 M6 6.5 H11 M6 8.5 H11" stroke="#666" stroke-width="0.7"/>
  <path d="M20 3 Q23.5 1.5 24.5 3 Q25.5 1.5 29 3 V11 Q25.5 9.5 24.5 11 Q23.5 9.5 20 11 Z M24.5 3 V11" fill="#fff" stroke="#444" stroke-width="0.8"/>
  <rect x="36" y="2" width="9" height="8" fill="#fff" stroke="#444" stroke-width="0.8"/><circle cx="44" cy="9.5" r="2.6" fill="#3a9a4a" stroke="#2a5aa0" stroke-width="0.6"/>
  <path d="M54 3 H62 M56 5.5 H62 M56 8 H62 M54 10.5 H62" stroke="#666" stroke-width="0.8"/><path d="M52.5 3 H53.2 M52.5 10.5 H53.2" stroke="#444" stroke-width="1"/>
  <path d="M69 2.5 H78 M69 5 H78 M69 7.5 H78 M69 10 H78" stroke="#555" stroke-width="0.8"/>
 </svg>
 <div class="a st" style="left:1046px">120%</div>
 <svg class="a" style="left:1074px;top:0" width="126" height="20" viewBox="0 0 126 20">
  <defs><radialGradient id="zb" cx="45%" cy="35%" r="70%"><stop offset="0" stop-color="#fdfeff"/><stop offset="1" stop-color="#b8cde8"/></radialGradient></defs>
  <circle cx="10.5" cy="9.5" r="7.5" fill="url(#zb)" stroke="#6c82a8" stroke-width="0.9"/>
  <path d="M6.5 9.5 H14.5" stroke="#2a3a5a" stroke-width="1.6"/>
  <path d="M19 9.5 H106" stroke="#8aa0c0" stroke-width="1"/><path d="M19 10.5 H106" stroke="#fff" stroke-width="1"/>
  <path d="M59.5 4 H66.5 V12 L63 15 L59.5 12 Z" fill="#f4f6fa" stroke="#6a7a9a" stroke-width="0.8"/>
  <circle cx="114" cy="9.5" r="7.5" fill="url(#zb)" stroke="#6c82a8" stroke-width="0.9"/>
  <path d="M110 9.5 H118 M114 5.5 V13.5" stroke="#2a3a5a" stroke-width="1.6"/>
 </svg>
</div>
<div class="a" style="left:0;top:675px;width:1200px;height:2px;background:#bfae8c"></div><div class="a" style="left:78px;top:675.5px;width:37px;height:1.5px;background:#ddd8cc"></div><div class="a" style="left:158px;top:675.5px;width:38px;height:1.5px;background:#f8f8f8"></div>

</body></html>
